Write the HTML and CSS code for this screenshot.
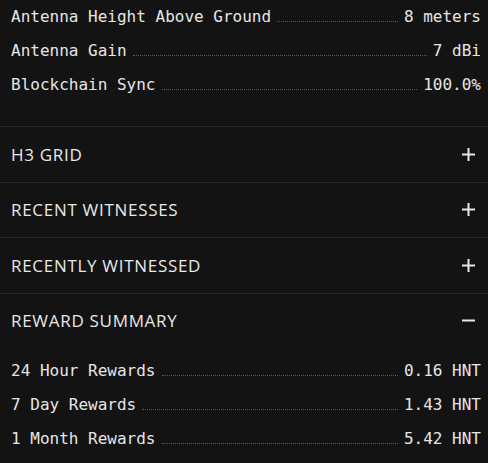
FILE: index.html
```html
<!DOCTYPE html>
<html lang="en">
<head>
  <meta charset="UTF-8" />
  <title>Hotspot details</title>
  <link rel="stylesheet" href="styles.css">
</head>
<body>
  <div class="stats">
    <div class="stat"><span class="label">Antenna Height Above Ground</span><span class="dots"></span><span class="value">8 meters</span></div>
    <div class="stat"><span class="label">Antenna Gain</span><span class="dots"></span><span class="value">7 dBi</span></div>
    <div class="stat"><span class="label">Blockchain Sync</span><span class="dots"></span><span class="value">100.0%</span></div>
  </div>

  <div class="section">
    <div class="section-head">
      <span class="section-title">H3 Grid</span>
      <svg class="toggle" viewBox="0 0 13 13"><path d="M0 6.5H13M6.5 0V13" /></svg>
    </div>
  </div>
  <div class="section">
    <div class="section-head">
      <span class="section-title">Recent Witnesses</span>
      <svg class="toggle" viewBox="0 0 13 13"><path d="M0 6.5H13M6.5 0V13" /></svg>
    </div>
  </div>
  <div class="section">
    <div class="section-head">
      <span class="section-title">Recently Witnessed</span>
      <svg class="toggle" viewBox="0 0 13 13"><path d="M0 6.5H13M6.5 0V13" /></svg>
    </div>
  </div>
  <div class="section open">
    <div class="section-head">
      <span class="section-title">Reward Summary</span>
      <svg class="toggle" viewBox="0 0 13 13"><path d="M0 6.5H13" /></svg>
    </div>
    <div class="stats inner">
      <div class="stat"><span class="label">24 Hour Rewards</span><span class="dots"></span><span class="value">0.16 HNT</span></div>
      <div class="stat"><span class="label">7 Day Rewards</span><span class="dots"></span><span class="value">1.43 HNT</span></div>
      <div class="stat"><span class="label">1 Month Rewards</span><span class="dots"></span><span class="value">5.42 HNT</span></div>
    </div>
  </div>
</body>
</html>
```

FILE: styles.css
```css
body {
  margin: 0;
  background: #131313;
  color: #e6e6e6;
  font-family: "DejaVu Sans Mono", "Liberation Mono", monospace;
}

.stats {
  padding: 0 7px 24px 11px;
}

.stats.inner {
  padding-top: 6px;
  padding-bottom: 0;
}

.stat {
  display: flex;
  align-items: baseline;
  height: 34px;
  line-height: 34px;
  font-size: 16px;
}

.dots {
  flex: 1;
  margin: 0 6px;
  border-bottom: 1px dotted #5a5a5a;
}

.section {
  border-top: 1px solid #262626;
}

.section-head {
  display: flex;
  align-items: center;
  justify-content: space-between;
  height: 54.5px;
  padding: 0 13px 0 11px;
}

.section-title {
  font-family: "Open Sans", "Noto Sans", sans-serif;
  font-size: 17px;
  font-weight: 500;
  letter-spacing: 0.7px;
  text-transform: uppercase;
  color: #e8e8e8;
}

.toggle {
  width: 13px;
  height: 13px;
  stroke: #e8e8e8;
  stroke-width: 2;
  fill: none;
}
```
